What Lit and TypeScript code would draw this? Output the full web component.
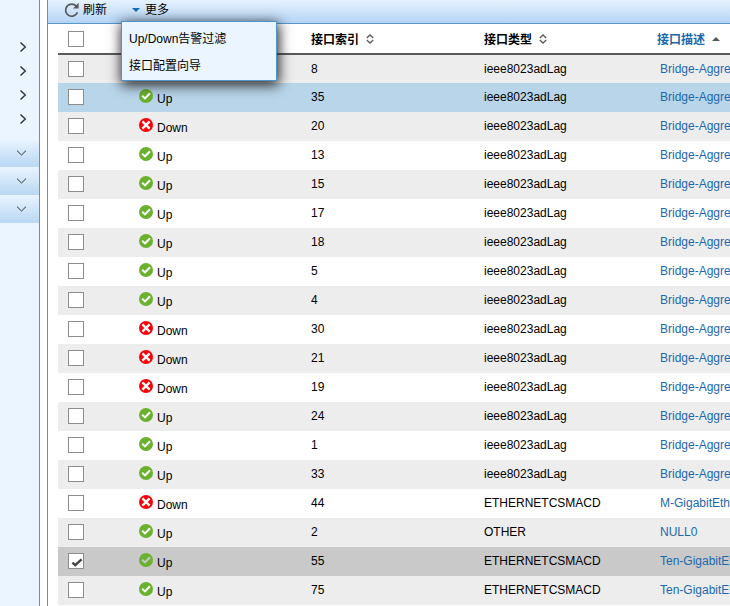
import { LitElement, html, css, svg } from "lit";
import { customElement, state } from "lit/decorators.js";
import { classMap } from "lit/directives/class-map.js";

interface PortRow {
  up: boolean;
  index: number;
  type: string;
  name: string;
  tone?: "hover";
}

const LAG = "ieee8023adLag";
const CSMACD = "ETHERNETCSMACD";

const ROWS: PortRow[] = [
  { up: true, index: 8, type: LAG, name: "Bridge-Aggregation1" },
  { up: true, index: 35, type: LAG, name: "Bridge-Aggregation2", tone: "hover" },
  { up: false, index: 20, type: LAG, name: "Bridge-Aggregation3" },
  { up: true, index: 13, type: LAG, name: "Bridge-Aggregation4" },
  { up: true, index: 15, type: LAG, name: "Bridge-Aggregation5" },
  { up: true, index: 17, type: LAG, name: "Bridge-Aggregation6" },
  { up: true, index: 18, type: LAG, name: "Bridge-Aggregation7" },
  { up: true, index: 5, type: LAG, name: "Bridge-Aggregation8" },
  { up: true, index: 4, type: LAG, name: "Bridge-Aggregation9" },
  { up: false, index: 30, type: LAG, name: "Bridge-Aggregation10" },
  { up: false, index: 21, type: LAG, name: "Bridge-Aggregation11" },
  { up: false, index: 19, type: LAG, name: "Bridge-Aggregation12" },
  { up: true, index: 24, type: LAG, name: "Bridge-Aggregation13" },
  { up: true, index: 1, type: LAG, name: "Bridge-Aggregation14" },
  { up: true, index: 33, type: LAG, name: "Bridge-Aggregation15" },
  { up: false, index: 44, type: CSMACD, name: "M-GigabitEthernet0/0/0" },
  { up: true, index: 2, type: "OTHER", name: "NULL0" },
  { up: true, index: 55, type: CSMACD, name: "Ten-GigabitEthernet1/0/1" },
  { up: true, index: 75, type: CSMACD, name: "Ten-GigabitEthernet1/0/2" },
];

const tick = svg`<circle cx="7" cy="7" r="7" fill="#69b12f"/>
  <path d="M3.2 6.8 6 9.4 11 4.3" fill="none" stroke="currentColor" stroke-width="2.1"/>`;
const cross = svg`<circle cx="7" cy="7" r="7" fill="#fb0007"/>
  <path d="M3.4 3.4 10.6 10.6M10.6 3.4 3.4 10.6" fill="none" stroke="currentColor" stroke-width="2.3"/>`;

@customElement("side-nav")
export class SideNav extends LitElement {
  static styles = css`
    :host {
      display: block;
      box-sizing: border-box;
      flex: 0 0 40px;
      padding-top: 35px;
      background: #ebf5ff;
      border-right: 1px solid #5598d0;
    }
    button {
      display: flex;
      align-items: center;
      width: 100%;
      height: 24px;
      margin: 0;
      padding: 0 0 0 19px;
      border: 0;
      background: none;
    }
    .groups {
      margin-top: 8px;
    }
    .group {
      height: 28px;
      padding-left: 16px;
      background: linear-gradient(#e9f4ff, #b9d7f3);
    }
    svg {
      display: block;
      fill: none;
      stroke: #333;
    }
  `;

  render() {
    return html`
      <nav>
        ${[1, 2, 3, 4].map(
          (n) => html`<button aria-label="展开 ${n}">
            <svg width="8" height="10" viewBox="0 0 8 10" stroke-width="1.4"><path d="M1.5 .5 6.3 5 1.5 9.5" /></svg>
          </button>`
        )}
        <div class="groups">
          ${[1, 2, 3].map(
            (n) => html`<button class="group" aria-label="分组 ${n}">
              <svg width="11" height="6" viewBox="0 0 11 6"><path d="M1 .6 5.5 5 10 .6" /></svg>
            </button>`
          )}
        </div>
      </nav>
    `;
  }
}

@customElement("tool-bar")
export class ToolBar extends LitElement {
  static styles = css`
    :host {
      display: flex;
      box-sizing: border-box;
      height: 24px;
      padding-left: 16px;
      gap: 25px;
      background: linear-gradient(#e6f2fe, #b4d4f4);
      border-bottom: 1px solid #5598d0;
    }
    button {
      display: flex;
      align-items: center;
      gap: 4px;
      margin: 0;
      padding: 0;
      border: 0;
      background: none;
      color: #000;
      font: 12px/18px "Liberation Sans", "Noto Sans CJK SC", sans-serif;
      white-space: nowrap;
      text-align: left;
    }
    .tool {
      height: 20px;
    }
    .more {
      position: relative;
    }
    .more .tool {
      gap: 5px;
    }
    .menu {
      position: absolute;
      top: 21px;
      left: -11px;
      z-index: 2;
      box-sizing: border-box;
      width: 156px;
      padding: 3px 0 1px;
      background: #ebf5ff;
      border: 1px solid #4f94cd;
      box-shadow: 1px 3px 12px 1px #222;
    }
    .menu button {
      width: 100%;
      height: 27px;
      padding-left: 7px;
    }
    svg {
      display: block;
    }
  `;

  render() {
    return html`
      <button class="tool">
        <svg width="15" height="16" viewBox="0 0 15 16">
          <path d="M12.4 4.2A6.1 6.1 0 1 0 13.4 10.4" fill="none" stroke="#58595b" stroke-width="1.7" />
          <path d="M14.6 .8V6.4H9Z" fill="#58595b" />
        </svg>
        刷新
      </button>
      <div class="more">
        <button class="tool" aria-haspopup="menu" aria-expanded="true">
          <svg width="8" height="4" viewBox="0 0 8 4"><path d="M0 0H8L4 4Z" fill="#0f6fba" /></svg>
          更多
        </button>
        <div class="menu" role="menu">
          <button role="menuitem">Up/Down告警过滤</button>
          <button role="menuitem">接口配置向导</button>
        </div>
      </div>
    `;
  }
}

@customElement("port-table")
export class PortTable extends LitElement {
  @state() private chosen = new Set<number>([55]);

  static styles = css`
    :host {
      display: block;
      margin-left: 10px;
      overflow: hidden;
    }
    table {
      width: 100%;
      min-width: 772px;
      table-layout: fixed;
      border-collapse: separate;
      border-spacing: 0;
    }
    .pick {
      width: 80px;
    }
    .col {
      width: 173px;
    }
    th,
    td {
      box-sizing: border-box;
      height: 29px;
      padding: 0 0 1px;
      text-align: left;
      white-space: nowrap;
      overflow: hidden;
      line-height: 16px;
    }
    th {
      height: 31px;
      padding: 0;
      border-bottom: 2px solid #58595b;
    }
    tbody tr:first-child td {
      height: 28px;
      padding: 0;
    }
    tbody tr:nth-child(odd) {
      background: #ededed;
    }
    tbody tr.hover {
      background: #b8d5ea;
    }
    tbody tr.selected {
      background: #c9c9c9;
    }
    input {
      appearance: none;
      display: block;
      box-sizing: border-box;
      width: 16px;
      height: 16px;
      margin: 0 0 0 10px;
      border: 1px solid #8c8c8c;
      background: #fff;
    }
    input:checked {
      background: #fff
        url("data:image/svg+xml,%3Csvg xmlns='http://www.w3.org/2000/svg' width='14' height='14'%3E%3Cpath d='M3.4 8.6 6.2 11.2 12.6 5.4' fill='none' stroke='%23444' stroke-width='2.4'/%3E%3C/svg%3E");
    }
    .sort {
      display: flex;
      align-items: center;
      gap: 7px;
      padding: 2px 0 0;
      border: 0;
      background: none;
      color: #000;
      font: bold 12px/18px "Liberation Sans", "Noto Sans CJK SC", sans-serif;
    }
    .sort svg {
      margin-bottom: 2px;
    }
    .active {
      color: #1b69ac;
    }
    .status {
      display: flex;
      align-items: flex-start;
      gap: 4px;
      height: 20px;
      padding-left: 1px;
    }
    .status span {
      padding-top: 4px;
    }
    .mark {
      margin-top: 2px;
      color: #fff;
    }
    .selected .mark {
      color: #c9c9c9;
    }
    svg {
      display: block;
    }
    a {
      padding-left: 3px;
      color: #1b69ac;
      text-decoration: none;
    }
  `;

  private toggle(index: number) {
    const next = new Set(this.chosen);
    next.has(index) ? next.delete(index) : next.add(index);
    this.chosen = next;
  }

  private sortMark() {
    return html`<svg width="8" height="10" viewBox="0 0 8 10">
      <path d="M.8 4 4 1 7.2 4M.8 6 4 9 7.2 6" fill="none" stroke="#58595b" stroke-width="1.3" />
    </svg>`;
  }

  render() {
    return html`
      <table>
        <colgroup>
          <col class="pick" />
          <col class="col" />
          <col class="col" />
          <col class="col" />
          <col />
        </colgroup>
        <thead>
          <tr>
            <th><input type="checkbox" aria-label="全选" /></th>
            <th></th>
            <th><button class="sort">接口索引 ${this.sortMark()}</button></th>
            <th><button class="sort">接口类型 ${this.sortMark()}</button></th>
            <th>
              <button class="sort active">
                接口描述
                <svg width="8" height="4" viewBox="0 0 8 4"><path d="M0 4H8L4 0Z" fill="#58595b" /></svg>
              </button>
            </th>
          </tr>
        </thead>
        <tbody>
          ${ROWS.map(
            (row) => html`<tr
              class=${classMap({ hover: row.tone === "hover", selected: this.chosen.has(row.index) })}
            >
              <td>
                <input
                  type="checkbox"
                  aria-label=${row.name}
                  .checked=${this.chosen.has(row.index)}
                  @change=${() => this.toggle(row.index)}
                />
              </td>
              <td>
                <div class="status">
                  <svg class="mark" width="14" height="14" viewBox="0 0 14 14">${row.up ? tick : cross}</svg>
                  <span>${row.up ? "Up" : "Down"}</span>
                </div>
              </td>
              <td>${row.index}</td>
              <td>${row.type}</td>
              <td><a href="#">${row.name}</a></td>
            </tr>`
          )}
        </tbody>
      </table>
    `;
  }
}

@customElement("app-root")
export class AppRoot extends LitElement {
  static styles = css`
    :host {
      display: flex;
      gap: 7px;
      min-height: 100vh;
      background: #fff;
      color: #000;
      font: 12px/16px "Liberation Sans", "Noto Sans CJK SC", sans-serif;
    }
    main {
      flex: 1;
      min-width: 0;
      border-left: 1px solid #5598d0;
    }
  `;

  render() {
    return html`
      <side-nav></side-nav>
      <main>
        <tool-bar></tool-bar>
        <port-table></port-table>
      </main>
    `;
  }
}
